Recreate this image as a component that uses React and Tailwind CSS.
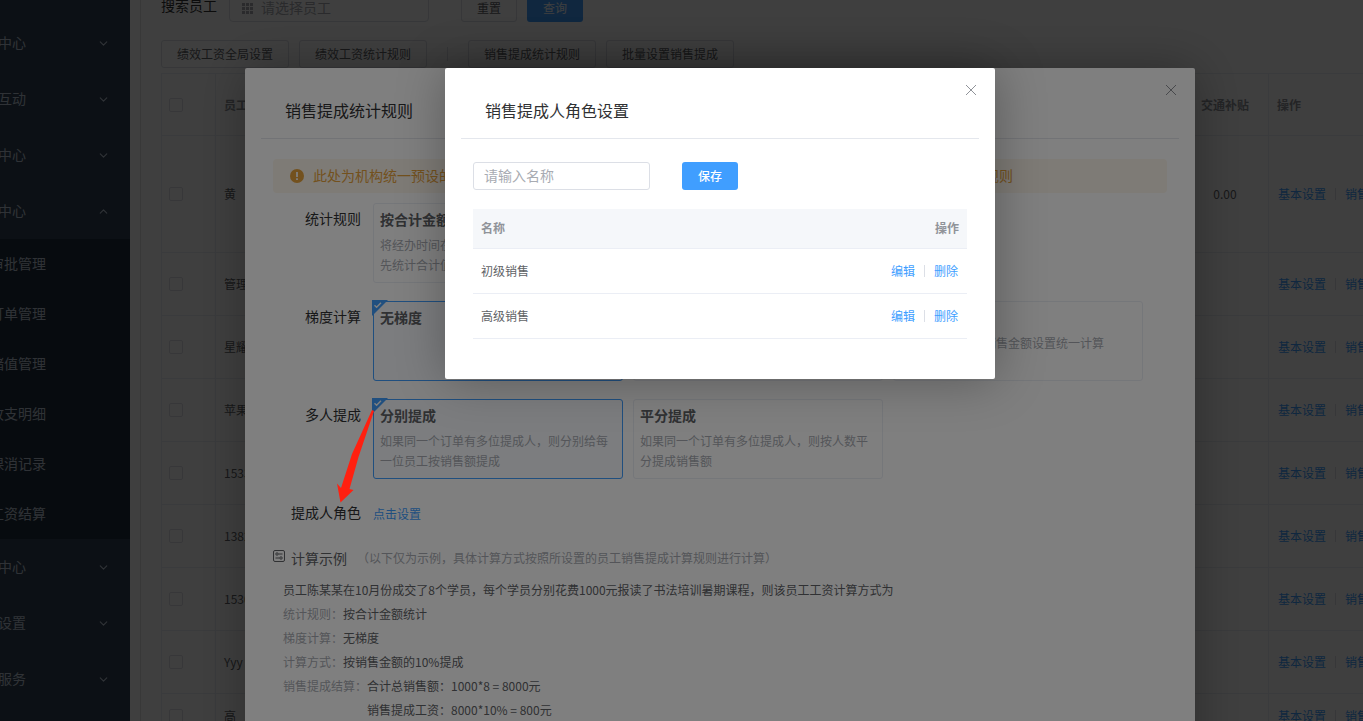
import React, { useState } from 'react';
import { ChevronDown, ChevronUp } from 'lucide-react';

const menuTop = ['学员中心', '家校互动', '教务中心', '财务中心'];
const subMenu = ['审批管理', '订单管理', '储值管理', '收支明细', '课消记录', '工资结算'];
const menuBottom = ['营销中心', '机构设置', '增值服务'];

const staff = [
  { name: '黄', allowance: '0.00', height: 'h-[117px]' },
  { name: '管理员', height: 'h-[63px]' },
  { name: '星耀', height: 'h-[63px]' },
  { name: '苹果', height: 'h-[63px]' },
  { name: '1533', height: 'h-[63px]' },
  { name: '1382', height: 'h-[63px]' },
  { name: '1530', height: 'h-[63px]' },
  { name: 'Yyy', height: 'h-[63px]' },
  { name: '高', height: 'h-[45px]' },
];

const roles = ['初级销售', '高级销售'];

const MenuItem = ({ label, open }) => (
  <button className="flex h-14 w-full items-center justify-between pr-5 text-sm text-[#bfcbd9]">
    <span className="-ml-[30px] w-14 pb-0.5 whitespace-nowrap">{label}</span>
    {open ? <ChevronUp size={13} strokeWidth={2} /> : <ChevronDown size={13} strokeWidth={2} />}
  </button>
);

const Sidebar = () => (
  <nav className="w-[130px] shrink-0 overflow-hidden bg-[#304156] pt-[15px]">
    {menuTop.map((label) => (
      <MenuItem key={label} label={label} open={label === '财务中心'} />
    ))}
    <div className="bg-[#1f2d3d]">
      {subMenu.map((label) => (
        <button key={label} className="flex h-[50px] w-full items-center pb-0.5 text-sm text-[#bfcbd9]">
          <span className="-ml-2.5 whitespace-nowrap">{label}</span>
        </button>
      ))}
    </div>
    {menuBottom.map((label) => (
      <MenuItem key={label} label={label} />
    ))}
  </nav>
);

const PlainButton = ({ children }) => (
  <button className="h-7 shrink-0 rounded-[3px] border border-[#dcdfe6] bg-white px-[15px] text-xs text-[#606266]">
    {children}
  </button>
);

const GridIcon = () => (
  <svg width="12" height="12" viewBox="0 0 12 12" fill="#a8abb2" className="shrink-0">
    {[1, 5, 9].map((y) =>
      [1, 5, 9].map((x) => <rect key={`${x}-${y}`} x={x} y={y} width="3" height="3" />)
    )}
  </svg>
);

const StaffTable = () => (
  <table className="w-[1400px] table-fixed border-collapse text-xs text-[#606266]">
    <colgroup>
      <col className="w-[54px]" />
      <col className="w-[966px]" />
      <col className="w-[87px]" />
      <col />
    </colgroup>
    <thead>
      <tr className="h-[62px] text-left text-[#909399]">
        <th className="border border-[#ebeef5] pl-[7px]">
          <input type="checkbox" aria-label="全选" className="block size-3.5 appearance-none rounded-xs border border-[#dcdfe6]" />
        </th>
        <th className="border border-[#ebeef5] pl-2 font-bold">员工</th>
        <th className="border border-[#ebeef5] text-center font-bold">交通补贴</th>
        <th className="border border-[#ebeef5] pl-2 font-bold">操作</th>
      </tr>
    </thead>
    <tbody>
      {staff.map((row) => (
        <tr key={row.name} className={row.height}>
          <td className="border border-[#ebeef5] pl-[7px]">
            <input type="checkbox" aria-label={row.name} className="block size-3.5 appearance-none rounded-xs border border-[#dcdfe6]" />
          </td>
          <td className="border border-[#ebeef5] pl-2">{row.name}</td>
          <td className="border border-[#ebeef5] text-center">{row.allowance}</td>
          <td className="border border-[#ebeef5] pl-[9px]">
            <div className="flex items-center text-[#409eff]">
              <a href="#base">基本设置</a>
              <span className="mx-[9px] h-3 w-px bg-[#dcdfe6]" />
              <a href="#sale">销售提成设置</a>
            </div>
          </td>
        </tr>
      ))}
    </tbody>
  </table>
);

const Page = () => (
  <div className="flex h-full overflow-hidden bg-white">
    <Sidebar />
    <div className="ml-2.5 flex min-w-0 flex-1 flex-col overflow-hidden border-l border-[#e0e0e0] pl-5">
      <div className="-mt-1.5 flex h-7 shrink-0 items-center">
        <label htmlFor="staff" className="w-[68px] shrink-0 pb-1.5 text-sm text-[#303133]">搜索员工</label>
        <div className="flex h-7 w-[200px] items-center gap-2 rounded border border-[#dcdfe6] px-[11px]">
          <GridIcon />
          <input id="staff" placeholder="请选择员工" className="w-full min-w-0 pb-0.5 text-sm placeholder:text-[#a8abb2]" />
        </div>
        <div className="ml-8 flex gap-2.5">
          <PlainButton>重置</PlainButton>
          <button className="h-7 rounded-[3px] bg-[#409eff] px-4 text-xs text-white">查询</button>
        </div>
      </div>
      <div className="mt-[18px] mb-[5px] flex shrink-0 items-center gap-2.5">
        <PlainButton>绩效工资全局设置</PlainButton>
        <PlainButton>绩效工资统计规则</PlainButton>
        <span className="mx-2.5 h-3.5 w-px bg-[#dcdfe6]" />
        <PlainButton>销售提成统计规则</PlainButton>
        <PlainButton>批量设置销售提成</PlainButton>
      </div>
      <StaffTable />
    </div>
  </div>
);

const DialogHeader = ({ title }) => (
  <header className="relative mx-4 flex h-[71px] items-center border-b border-[#e4e7ed] pt-3.5 pl-6">
    <h2 className="text-base text-[#303133]">{title}</h2>
    <button aria-label="关闭" className="absolute top-4 right-0.5 text-[#909399]">
      <svg width="12" height="12" viewBox="0 0 12 12" fill="none" stroke="currentColor">
        <path d="M1 1L11 11M11 1L1 11" />
      </svg>
    </button>
  </header>
);

const Option = ({ title, lines = [], active }) => (
  <button
    className={`relative flex h-20 w-[250px] shrink-0 flex-col rounded-[3px] border px-1.5 pt-[5px] text-left ${
      active ? 'border-[#409eff] bg-[#f8fbff]' : 'border-[#ebeef5]'
    }`}
  >
    {active && (
      <svg className="absolute -top-0.5 -left-0.5" width="16" height="16" viewBox="0 0 16 16">
        <path d="M0 0H16L0 16Z" fill="#409eff" />
        <path d="M2.5 5.2L4.6 7.2L9 2.8" fill="none" stroke="#fff" strokeWidth="1.4" />
      </svg>
    )}
    <span className="text-sm font-bold text-[#606266]">{title}</span>
    <span className="mt-1.5 block text-xs leading-5 whitespace-nowrap text-[#a8abb2]">
      {lines.map((line) => (
        <span key={line} className="block">{line}</span>
      ))}
    </span>
  </button>
);

const RuleRow = ({ label, children }) => (
  <div className="flex">
    <span className="w-[88px] shrink-0 pt-[5px] text-right text-sm text-[#303133]">{label}</span>
    <div className="ml-3 flex gap-2.5">{children}</div>
  </div>
);

const ExampleIcon = () => (
  <svg width="12" height="12" viewBox="0 0 12 12" fill="none" stroke="#606266" strokeWidth="1" className="mb-1">
    <rect x="0.5" y="0.5" width="11" height="11" rx="1.5" />
    <circle cx="4" cy="4" r="1.2" />
    <path d="M5.5 4H9.5M2.5 8H6.5" />
    <circle cx="8" cy="8" r="1.2" />
  </svg>
);

const RuleDialog = () => (
  <section className="mx-auto mt-[68px] h-[900px] w-[950px] rounded-xs bg-white shadow-[1px_1px_50px_rgba(0,0,0,0.3)]">
    <DialogHeader title="销售提成统计规则" />
    <div className="px-7 pt-5">
      <div className="flex h-[34px] items-center rounded bg-[#fdf6ec] px-[17px] text-sm whitespace-nowrap text-[#e6a23c]">
        <svg width="14" height="14" viewBox="0 0 14 14" className="mr-[9px]">
          <circle cx="7" cy="7" r="7" fill="#e6a23c" />
          <path d="M7 3V8" stroke="#fdf6ec" strokeWidth="2" />
          <path d="M7 9.3V11" stroke="#fdf6ec" strokeWidth="2" />
        </svg>
        <p className="pb-0.5">此处为机构统一预设的销售提成统计规则，如需单独设置员工规则，请在员工列表中点击操作栏设置销售提成规则</p>
      </div>
      <div className="mt-2.5 flex flex-col gap-[18px]">
        <RuleRow label="统计规则">
          <Option title="按合计金额统计" lines={['将经办时间在统计周期内的订单，', '先统计合计值再计算提成']} />
        </RuleRow>
        <RuleRow label="梯度计算">
          <Option title="无梯度" active />
          <Option title="分段梯度" />
          <Option title="统一梯度" lines={['根据所有员工按销售金额设置统一计算']} />
        </RuleRow>
        <RuleRow label="多人提成">
          <Option title="分别提成" active lines={['如果同一个订单有多位提成人，则分别给每', '一位员工按销售额提成']} />
          <Option title="平分提成" lines={['如果同一个订单有多位提成人，则按人数平', '分提成销售额']} />
        </RuleRow>
        <RuleRow label="提成人角色">
          <a href="#roles" className="pt-[9px] text-xs text-[#409eff]">点击设置</a>
        </RuleRow>
      </div>
      <div className="mt-[26px] flex items-center">
        <ExampleIcon />
        <h3 className="ml-1.5 text-sm text-[#606266]">计算示例</h3>
        <span className="ml-2.5 text-xs text-[#a8abb2]">（以下仅为示例，具体计算方式按照所设置的员工销售提成计算规则进行计算）</span>
      </div>
      <div className="mt-2.5 pl-2.5 text-xs leading-6 text-[#606266]">
        <p>员工陈某某在10月份成交了8个学员，每个学员分别花费1000元报读了书法培训暑期课程，则该员工工资计算方式为</p>
        <p><span className="text-[#a8abb2]">统计规则：</span>按合计金额统计</p>
        <p><span className="text-[#a8abb2]">梯度计算：</span>无梯度</p>
        <p><span className="text-[#a8abb2]">计算方式：</span>按销售金额的10%提成</p>
        <p><span className="text-[#a8abb2]">销售提成结算：</span>合计总销售额：1000*8 = 8000元</p>
        <p className="pl-[84px]">销售提成工资：8000*10% = 800元</p>
      </div>
    </div>
  </section>
);

const RoleDialog = () => {
  const [name, setName] = useState('');

  return (
    <section className="mx-auto mt-[68px] w-[550px] rounded-xs bg-white pb-10 shadow-[1px_1px_50px_rgba(0,0,0,0.3)]">
      <DialogHeader title="销售提成人角色设置" />
      <div className="px-7 pt-[23px]">
        <div className="flex gap-8">
          <input
            aria-label="名称"
            value={name}
            onChange={(e) => setName(e.target.value)}
            placeholder="请输入名称"
            className="h-7 w-[177px] rounded-[3px] border border-[#dcdfe6] px-2.5 pb-0.5 text-sm placeholder:text-[#a8abb2]"
          />
          <button className="h-7 rounded-[3px] bg-[#409eff] px-4 text-xs font-medium text-white">保存</button>
        </div>
        <table className="mt-[19px] w-full border-collapse text-xs text-[#606266]">
          <thead>
            <tr className="h-[39px] border-b border-[#ebeef5] bg-[#f5f7fa] text-[#909399]">
              <th className="px-2 text-left font-bold">名称</th>
              <th className="px-2 text-right font-bold">操作</th>
            </tr>
          </thead>
          <tbody>
            {roles.map((role) => (
              <tr key={role} className="h-[45px] border-b border-[#ebeef5]">
                <td className="px-2">{role}</td>
                <td className="px-[9px]">
                  <div className="flex items-center justify-end text-[#409eff]">
                    <button>编辑</button>
                    <span className="mx-[9px] h-3 w-px bg-[#dcdfe6]" />
                    <button>删除</button>
                  </div>
                </td>
              </tr>
            ))}
          </tbody>
        </table>
      </div>
    </section>
  );
};

const App = () => (
  <div className="relative h-screen overflow-hidden font-['Noto_Sans_CJK_SC',sans-serif]">
    <Page />
    <div className="absolute inset-0 overflow-hidden bg-black/50 pl-[77px]">
      <RuleDialog />
    </div>
    <div className="absolute inset-0 overflow-hidden bg-black/50 pl-[77px]">
      <RoleDialog />
    </div>
    {/* Pointer to the role setting row */}
    <svg className="absolute top-[408px] left-[334px]" width="42" height="96" viewBox="0 0 42 96">
      <path d="M38 2L18 46L7 80L3 75.5L6.5 94.5L19.5 82L15.5 81L24.5 49L40 3Z" fill="#ff2010" />
    </svg>
  </div>
);

export default App;
